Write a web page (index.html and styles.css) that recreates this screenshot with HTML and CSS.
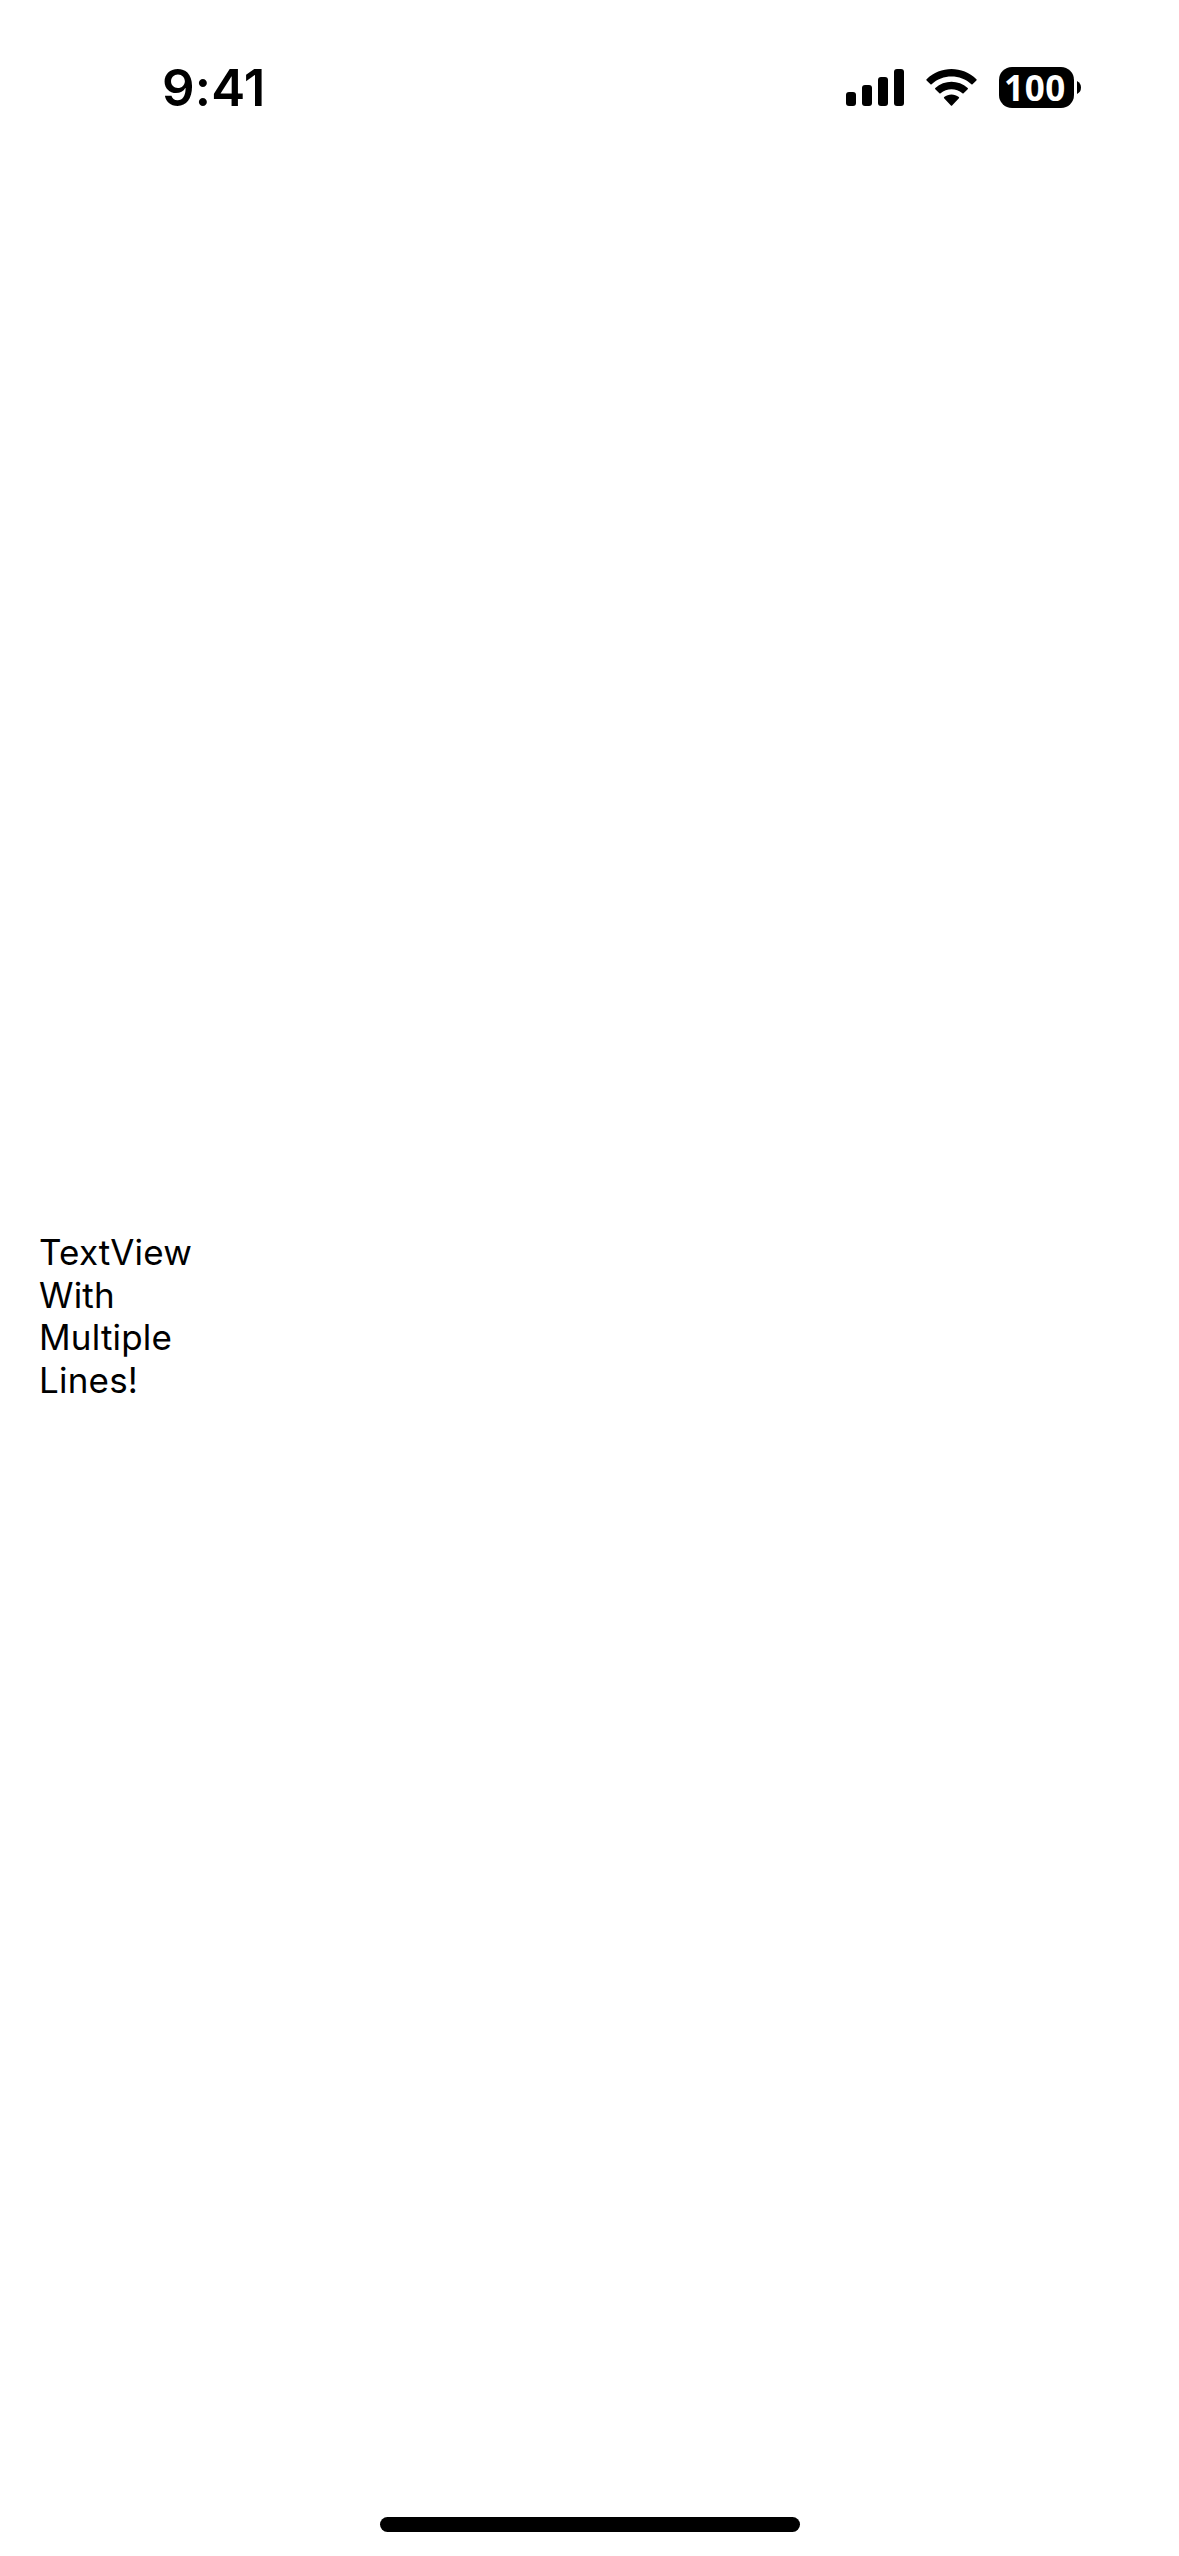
FILE: index.html
```html
<!DOCTYPE html>
<html lang="en">
<head>
<meta charset="utf-8">
<title>TextView</title>
<link rel="stylesheet" href="styles.css">
</head>
<body>
<div class="screen">
  <header class="status-bar">
    <time class="clock">9:41</time>
    <div class="indicators">
      <svg class="signal" viewBox="0 0 58 37" aria-label="Signal">
        <rect x="0" y="23" width="10" height="14" rx="3"/>
        <rect x="16" y="16" width="10" height="21" rx="3"/>
        <rect x="32" y="8" width="10" height="29" rx="3"/>
        <rect x="48" y="0" width="10" height="37" rx="3"/>
      </svg>
      <svg class="wifi" viewBox="0 0 51 37" aria-label="Wi-Fi">
        <path d="M.6 10.2C14.5-3.4 36.500-3.400 50.400 10.200Q51 10.800 50.400 11.400L46.500 15.300Q46 15.800 45.400 15.200C34.300 4.900 16.700 4.900 5.600 15.200Q5 15.800 4.500 15.300L.6 11.400Q0 10.800 .6 10.200Z"/>
        <path d="M9.300 19C18.500 10.600 32.500 10.600 41.700 19Q42.300 19.600 41.700 20.200L37.600 24.300Q37 24.800 36.400 24.300C30.200 18.800 20.800 18.800 14.600 24.300Q14 24.800 13.400 24.300L9.300 20.200Q8.700 19.600 9.300 19Z"/>
        <path d="M18.200 28C22.400 24.500 28.600 24.500 32.800 28Q33.500 28.700 32.900 29.300L26.100 36.400Q25.500 37 24.900 36.400L18.100 29.300Q17.500 28.700 18.200 28Z"/>
      </svg>
      <div class="battery">
        <span class="battery-body">100</span>
        <svg class="battery-cap" viewBox="0 0 4 13"><path d="M0 0Q4 2 4 6.500T0 13Z"/></svg>
      </div>
    </div>
  </header>
  <main class="content">
    <p class="text-view">TextView<br>With<br>Multiple<br>Lines!</p>
  </main>
  <footer class="home-area"><div class="home-indicator"></div></footer>
</div>
</body>
</html>
```
FILE: styles.css
```css
body {
  margin: 0;
  background: #fff;
  color: #000;
  font-family: Inter, "Liberation Sans", sans-serif;
}

.screen {
  box-sizing: border-box;
  height: 2556px;
  display: flex;
  flex-direction: column;
}

.status-bar {
  box-sizing: border-box;
  height: 177px;
  padding: 58px 98px 0 162px;
  display: flex;
  justify-content: space-between;
  align-items: flex-start;
}

.clock {
  font-size: 51px;
  font-weight: 570;
  line-height: 60px;
  letter-spacing: 0.2px;
}

.indicators {
  height: 59px;
  display: flex;
  align-items: center;
}

.signal {
  width: 58px;
  height: 37px;
  margin-right: 22px;
}

.wifi {
  width: 51px;
  height: 37px;
  margin-right: 22px;
}

.battery {
  display: flex;
  align-items: center;
  gap: 3px;
}

.battery-body {
  box-sizing: border-box;
  width: 75px;
  height: 41px;
  padding-right: 3px;
  border-radius: 13px;
  background: #000;
  color: #fff;
  font-family: "Open Sans", sans-serif;
  font-size: 35px;
  font-weight: 700;
  line-height: 41px;
  text-align: center;
  letter-spacing: 0.6px;
}

.battery-cap {
  width: 4px;
  height: 13px;
}

.content {
  flex: 1;
  padding: 1054px 39px 0;
}

.text-view {
  margin: 0;
  font-size: 35px;
  line-height: 42.6px;
  letter-spacing: 0.2px;
}

.home-area {
  height: 39px;
  display: flex;
  justify-content: center;
  align-items: flex-start;
}

.home-indicator {
  width: 420px;
  height: 15px;
  border-radius: 8px;
  background: #000;
}
```
